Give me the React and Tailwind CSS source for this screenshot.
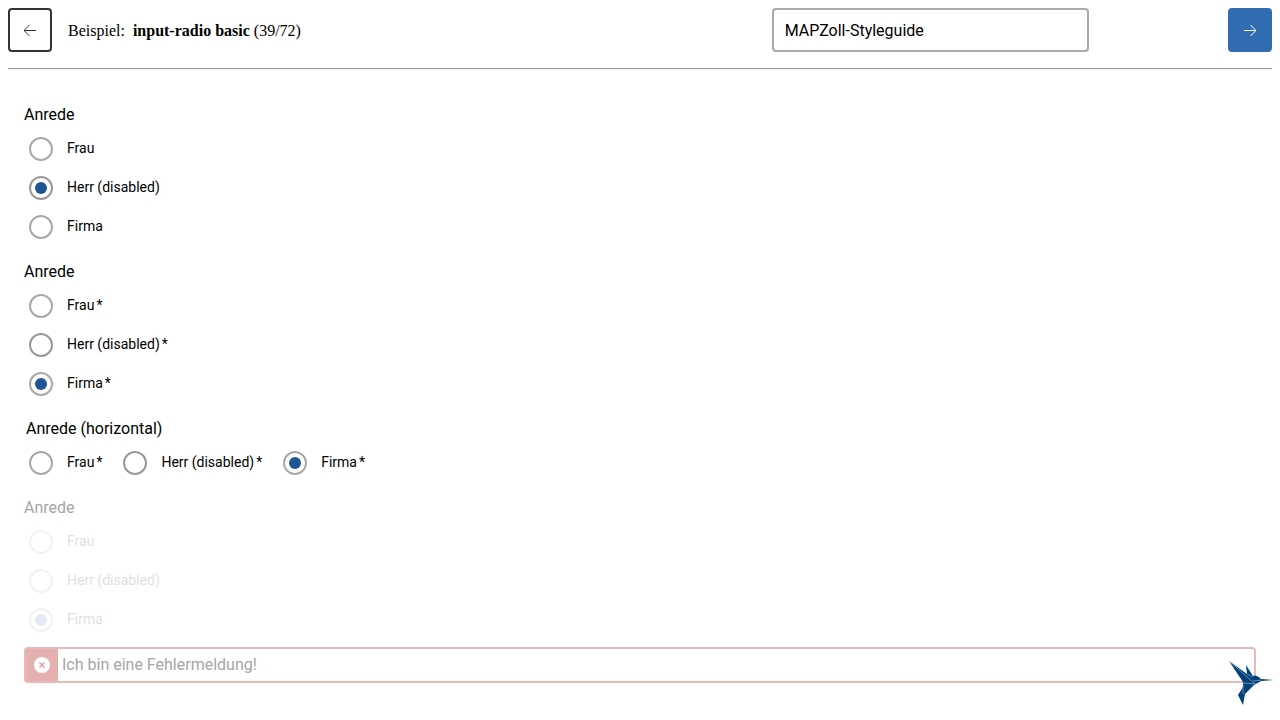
import React from "react";

function Radio({ name, label, checked, disabled, required, faded }) {
  return (
    <label className="flex items-start gap-[14px]">
      <input
        type="radio"
        name={name}
        defaultChecked={checked}
        disabled={disabled}
        className={`size-6 shrink-0 appearance-none rounded-full border-2 bg-white bg-clip-content p-1 ${
          faded
            ? "border-[#f2f2f2] checked:bg-[#e4eaf2]"
            : disabled
              ? "border-[#999] checked:bg-[#1f5594]"
              : "border-[#a9a9a9] checked:bg-[#1f5594]"
        }`}
      />
      <span className={`flex gap-[2px] text-sm leading-[22px] ${faded ? "text-[#e1e1e1]" : ""}`}>
        {label}
        {required && <span>*</span>}
      </span>
    </label>
  );
}

function Group({ title, name, selected, required, horizontal, faded }) {
  const options = ["Frau", "Herr (disabled)", "Firma"];
  return (
    <fieldset className="min-w-0">
      <legend className={`mb-[10px] text-base leading-6 ${horizontal ? "pl-[2px]" : ""} ${faded ? "text-[#a6a6a6]" : ""}`}>
        {title}
      </legend>
      <div className={`flex pl-[5px] ${horizontal ? "gap-[21px]" : "flex-col items-start gap-[15px]"}`}>
        {options.map((label, i) => (
          <Radio
            key={label}
            name={name}
            label={label}
            checked={selected === i}
            disabled={i === 1 || faded}
            required={required}
            faded={faded}
          />
        ))}
      </div>
    </fieldset>
  );
}

function Arrow({ flip }) {
  return (
    <svg viewBox="0 0 12 12" className={`size-3 ${flip ? "-scale-x-100" : ""}`} fill="none" stroke="currentColor" aria-hidden="true">
      <path d="M0 6.5H12M6.5 1L12 6.5L6.5 12" />
    </svg>
  );
}

export default function App() {
  return (
    <div className="p-2 font-['Roboto',sans-serif] text-black">
      <header className="flex items-center pb-4">
        <button aria-label="Zurück" className="flex size-11 items-center justify-center rounded border-2 border-[#333] text-[#333]">
          <Arrow flip />
        </button>
        <p className="ml-4 pt-[2px] font-['Liberation_Serif',serif] text-base">
          Beispiel:&nbsp; <b>input-radio basic</b> (39/72)
        </p>
        <select
          aria-label="Styleguide"
          className="mr-[11%] ml-auto h-11 w-[25.1%] appearance-none rounded border-2 border-[#a9a9a9] bg-white px-[11px] pt-[2px] text-base"
        >
          <option>MAPZoll-Styleguide</option>
        </select>
        <button aria-label="Weiter" className="flex size-11 items-center justify-center rounded bg-[#326cb0] text-white">
          <Arrow />
        </button>
      </header>
      <hr className="h-[2px] border-t border-b border-t-[#999] border-b-[#eee]" />
      <main className="flex flex-col gap-[21px] px-4 pt-[33px]">
        <Group title="Anrede" name="a" selected={1} />
        <Group title="Anrede" name="b" selected={2} required />
        <Group title="Anrede (horizontal)" name="c" selected={2} required horizontal />
        <div>
          <Group title="Anrede" name="d" selected={2} faded />
          <div role="alert" className="mt-[15px] flex h-9 rounded border-2 border-[#e9b9b9] text-[#a6a6a6]">
            <span className="flex w-8 items-center justify-center bg-[#e4b0b0]">
              <svg viewBox="0 0 16 16" className="size-4" aria-hidden="true">
                <circle cx="8" cy="8" r="8" fill="#fff" />
                <path d="M5.5 5.5L10.5 10.5M10.5 5.5L5.5 10.5" stroke="#dfa0a0" strokeWidth="1.5" />
              </svg>
            </span>
            <span className="px-1 leading-8">Ich bin eine Fehlermeldung!</span>
          </div>
        </div>
      </main>
      <svg viewBox="0 0 46 46" className="fixed right-[6px] bottom-[14px] size-[46px]" aria-hidden="true">
        <path
          fill="#004178"
          d="M1 1L19 14L18 5L25 16Q29 14 33 19L46 20L33 21L26 25L17 34L15 45L10 35L15 27V22Z"
        />
        <path
          fill="none"
          stroke="#a9c0d3"
          strokeWidth="0.6"
          d="M1 1L27 24M15 23L27 24M15 23V34M19 14L25 17M25 21L33 20"
        />
      </svg>
    </div>
  );
}
